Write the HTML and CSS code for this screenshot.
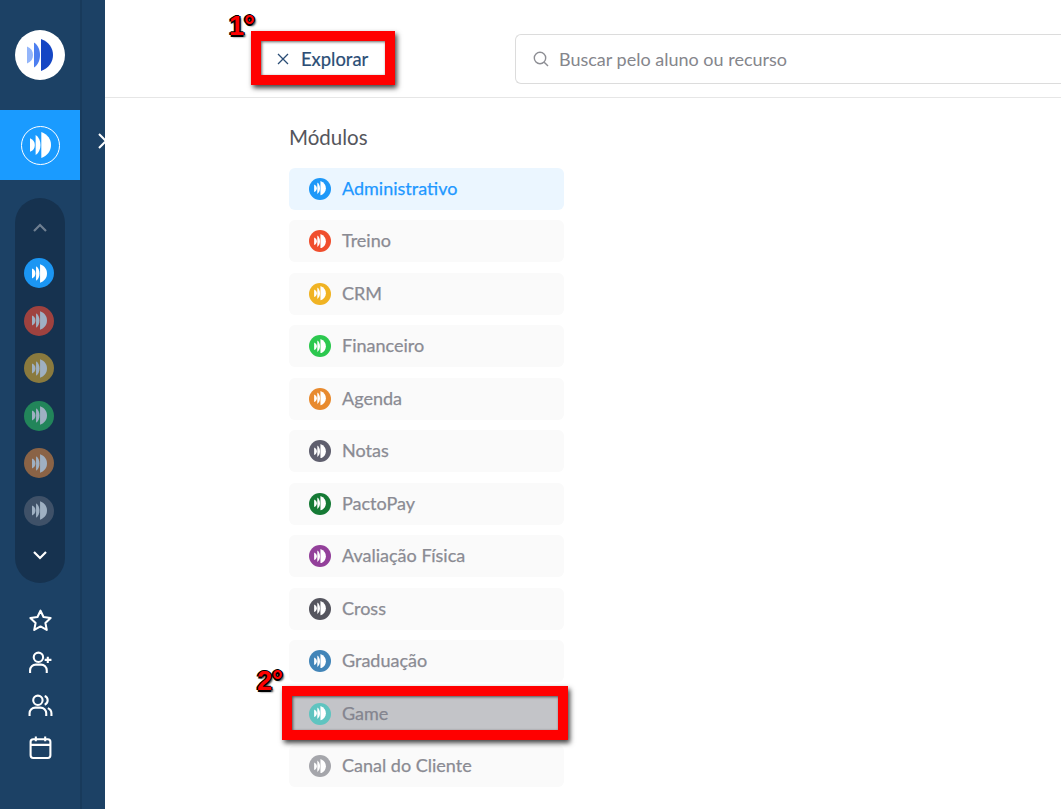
FILE: index.html
```html
<!DOCTYPE html>
<html lang="pt-BR">
<head>
  <meta charset="UTF-8" />
  <meta name="viewport" content="width=device-width, initial-scale=1.0"/>
  <title>Explorar módulos</title>
  <link rel="stylesheet" href="styles.css">
</head>
<body>

  <!-- Shared icon shapes -->
  <svg class="sprite" xmlns="http://www.w3.org/2000/svg">
    <symbol id="mark" viewBox="0 0 26 32">
      <path d="M14 0C22 3 26 9 26 16C26 23 22 29 14 32Z"/>
      <path d="M7 3.500C11 6 13 11 13 16C13 21 11 26 7 28.500Z"/>
      <path d="M0 7.500C4 9 6 12 6 16C6 20 4 23 0 24.500Z"/>
    </symbol>
  </svg>

  <!-- Sidebar -->
  <aside class="sidebar">
    <div class="rail">
      <div class="logo">
        <svg class="logo-mark" viewBox="0 0 26 32">
          <path fill="#1546c4" d="M14 0C22 3 26 9 26 16C26 23 22 29 14 32Z"/>
          <path fill="#4d7ff0" d="M7 3.500C11 6 13 11 13 16C13 21 11 26 7 28.500Z"/>
          <path fill="#93b5fa" d="M0 7.500C4 9 6 12 6 16C6 20 4 23 0 24.500Z"/>
        </svg>
      </div>

      <div class="tile">
        <div class="tile-ring"><svg class="tile-mark"><use href="#mark"/></svg></div>
      </div>

      <div class="pill">
        <svg class="chevron dim" viewBox="0 0 16 10"><path d="M2 8l6-6 6 6"/></svg>
        <div class="pill-list">
          <div class="dot dot-blue"><svg class="dot-mark"><use href="#mark"/></svg></div>
          <div class="dot dot-red"><svg class="dot-mark"><use href="#mark"/></svg></div>
          <div class="dot dot-yellow"><svg class="dot-mark"><use href="#mark"/></svg></div>
          <div class="dot dot-green"><svg class="dot-mark"><use href="#mark"/></svg></div>
          <div class="dot dot-orange"><svg class="dot-mark"><use href="#mark"/></svg></div>
          <div class="dot dot-slate"><svg class="dot-mark"><use href="#mark"/></svg></div>
        </div>
        <svg class="chevron" viewBox="0 0 16 10"><path d="M2 2l6 6 6-6"/></svg>
      </div>

      <div class="shortcuts">
        <svg class="shortcut" viewBox="0 0 24 24"><path d="M12 2.500l2.900 6.200 6.800.900-5 4.700 1.300 6.700-6-3.300-6 3.300 1.300-6.700-5-4.700 6.800-.900z"/></svg>
        <svg class="shortcut" viewBox="0 0 24 24"><circle cx="10" cy="7" r="4.500"/><path d="M2 22v-2.500a5.500 5.500 0 0 1 5.500-5.500h5a5.500 5.500 0 0 1 5.500 5.500v2.500M19 6.500v6M16 9.500h6.500"/></svg>
        <svg class="shortcut" viewBox="0 0 24 24"><circle cx="9.500" cy="7" r="4.500"/><path d="M1.500 22v-2.500a5.500 5.500 0 0 1 5.500-5.500h5a5.500 5.500 0 0 1 5.500 5.500v2.500M16 2.800a4.500 4.500 0 0 1 0 8.400M19 14.500a5.500 5.500 0 0 1 3.500 5v2.500"/></svg>
        <svg class="shortcut" viewBox="0 0 24 24"><rect x="2.500" y="4" width="19" height="18" rx="2.500"/><path d="M2.500 9.500h19M7.500 1.500v4.500M16.500 1.500v4.500"/></svg>
      </div>
    </div>
    <div class="strip">
      <svg class="expand" viewBox="0 0 12 18"><path d="M2 2l7 7-7 7"/></svg>
    </div>
  </aside>

  <!-- Main -->
  <main class="main">
    <header class="topbar">
      <button class="explore">
        <svg class="explore-x" viewBox="0 0 12 12"><path d="M1 1l10 10M11 1L1 11"/></svg>
        Explorar
      </button>
      <div class="search">
        <svg class="search-icon" viewBox="0 0 16 16"><circle cx="7" cy="7" r="5.700"/><path d="M11.200 11.200L15 15"/></svg>
        <span>Buscar pelo aluno ou recurso</span>
      </div>
    </header>

    <section class="modules">
      <h2 class="modules-title">Módulos</h2>
      <div class="module active"><div class="badge c-admin"><svg class="badge-mark"><use href="#mark"/></svg></div><span class="module-name">Administrativo</span></div>
      <div class="module"><div class="badge c-treino"><svg class="badge-mark"><use href="#mark"/></svg></div><span class="module-name">Treino</span></div>
      <div class="module"><div class="badge c-crm"><svg class="badge-mark"><use href="#mark"/></svg></div><span class="module-name">CRM</span></div>
      <div class="module"><div class="badge c-fin"><svg class="badge-mark"><use href="#mark"/></svg></div><span class="module-name">Financeiro</span></div>
      <div class="module"><div class="badge c-agenda"><svg class="badge-mark"><use href="#mark"/></svg></div><span class="module-name">Agenda</span></div>
      <div class="module"><div class="badge c-notas"><svg class="badge-mark"><use href="#mark"/></svg></div><span class="module-name">Notas</span></div>
      <div class="module"><div class="badge c-pay"><svg class="badge-mark"><use href="#mark"/></svg></div><span class="module-name">PactoPay</span></div>
      <div class="module"><div class="badge c-aval"><svg class="badge-mark"><use href="#mark"/></svg></div><span class="module-name">Avaliação Física</span></div>
      <div class="module"><div class="badge c-cross"><svg class="badge-mark"><use href="#mark"/></svg></div><span class="module-name">Cross</span></div>
      <div class="module"><div class="badge c-grad"><svg class="badge-mark"><use href="#mark"/></svg></div><span class="module-name">Graduação</span></div>
      <div class="module marked"><div class="badge c-game"><svg class="badge-mark"><use href="#mark"/></svg></div><span class="module-name">Game</span></div>
      <div class="module"><div class="badge c-canal"><svg class="badge-mark"><use href="#mark"/></svg></div><span class="module-name">Canal do Cliente</span></div>
    </section>
  </main>

  <!-- Annotations drawn over the screenshot -->
  <div class="note-box note-box-1"></div>
  <div class="note-box note-box-2"></div>
  <span class="note-label note-label-1">1°</span>
  <span class="note-label note-label-2">2°</span>

</body>
</html>
```

FILE: styles.css
```css
html, body {
  height: 100%;
}
body {
  font-family: "Lato", "Noto Sans", sans-serif;
  margin: 0;
  background-color: #fff;
  display: flex;
  overflow: hidden;
  position: relative;
}
.sprite {
  display: none;
}

/* Sidebar */
.sidebar {
  width: 105px;
  flex-shrink: 0;
  display: flex;
  background: #1c4165;
  overflow: hidden;
}
.rail {
  width: 80px;
  flex-shrink: 0;
  display: flex;
  flex-direction: column;
  align-items: center;
  border-right: 2px solid #183a5b;
}
.strip {
  flex: 1;
  display: flex;
  flex-direction: column;
  align-items: flex-start;
  padding: 132px 0 0 15px;
}
.expand {
  width: 12px;
  height: 18px;
  flex-shrink: 0;
  fill: none;
  stroke: #fff;
  stroke-width: 2;
}
.logo {
  width: 50px;
  height: 50px;
  margin-top: 30px;
  border-radius: 50%;
  background: #fff;
  display: flex;
  align-items: center;
  justify-content: center;
}
.logo-mark {
  width: 26px;
  height: 32px;
}
.tile {
  width: 100%;
  height: 70px;
  margin-top: 30px;
  background: #1a9bff;
  display: flex;
  align-items: center;
  justify-content: center;
}
.tile-ring {
  width: 37px;
  height: 37px;
  border: 1.500px solid #fff;
  border-radius: 50%;
  display: flex;
  align-items: center;
  justify-content: center;
}
.tile-mark {
  width: 21px;
  height: 26px;
  fill: #fff;
}
.pill {
  width: 50px;
  height: 385px;
  margin-top: 18px;
  box-sizing: border-box;
  padding-top: 25px;
  border-radius: 25px;
  background: #16324f;
  display: flex;
  flex-direction: column;
  align-items: center;
}
.chevron {
  width: 16px;
  height: 10px;
  flex-shrink: 0;
  fill: none;
  stroke: #fff;
  stroke-width: 2.200;
}
.chevron.dim {
  stroke: #6f7f91;
}
.pill-list {
  display: flex;
  flex-direction: column;
  gap: 17.500px;
  margin: 25px 2px 24px 0;
}
.dot {
  width: 30px;
  height: 30px;
  border-radius: 50%;
  display: flex;
  align-items: center;
  justify-content: center;
  fill: #9fb0c2;
}
.dot-mark {
  width: 15px;
  height: 19px;
}
.dot-blue { background: #1b96f3; fill: #fff; }
.dot-red { background: #9f423f; }
.dot-yellow { background: #8a7a3e; }
.dot-green { background: #22855a; }
.dot-orange { background: #8a6346; }
.dot-slate { background: #3f5168; }
.shortcuts {
  display: flex;
  flex-direction: column;
  align-items: center;
  gap: 17.300px;
  margin-top: 25px;
}
.shortcut {
  width: 25px;
  height: 25px;
  fill: none;
  stroke: #fff;
  stroke-width: 2;
  stroke-linejoin: round;
}

/* Main */
.main {
  flex: 1;
  min-width: 0;
  display: flex;
  flex-direction: column;
}
.topbar {
  height: 76px;
  flex-shrink: 0;
  display: flex;
  align-items: center;
  border-bottom: 1px solid #e6e6e6;
  padding-top: 21px;
}
.explore {
  margin-left: 172px;
  width: 238px;
  flex-shrink: 0;
  padding: 0;
  border: none;
  background: none;
  display: flex;
  align-items: center;
  gap: 12px;
  font-family: inherit;
  font-size: 18.400px;
  color: #2a4d75;
  -webkit-text-stroke: 0.2px currentColor;
}
.explore-x {
  width: 12px;
  height: 12px;
  fill: none;
  stroke: #2a4d75;
  stroke-width: 1.300;
}
/* the box runs on to the window edge, so no right side shows */
.search {
  flex: 1;
  height: 50px;
  box-sizing: border-box;
  padding-left: 17px;
  border: 1px solid #dcdcdc;
  border-right: none;
  border-radius: 6px 0 0 6px;
  display: flex;
  align-items: center;
  gap: 10px;
  font-size: 18px;
  color: #85868c;
}
.search-icon {
  width: 16px;
  height: 16px;
  fill: none;
  stroke: #8d8e94;
  stroke-width: 1.400;
}
.modules {
  width: 275px;
  margin-left: 184px;
  display: flex;
  flex-direction: column;
  gap: 10.500px;
}
.modules-title {
  margin: 26px 0 7px;
  font-size: 20.500px;
  line-height: 26px;
  font-weight: 400;
  color: #55565c;
}
.module {
  height: 42px;
  padding-left: 20px;
  border-radius: 6px;
  background: #fafafa;
  display: flex;
  align-items: center;
  gap: 11px;
  font-size: 18px;
  color: #8a8b93;
}
.module-name {
  margin-top: -2px;
  -webkit-text-stroke: 0.25px currentColor;
}
.module.active {
  background: #ebf6ff;
  color: #1e98ff;
}
.module.marked {
  background: #c3c4c8;
  color: #84858f;
}
.badge {
  width: 22px;
  height: 22px;
  border-radius: 50%;
  display: flex;
  align-items: center;
  justify-content: center;
  fill: #fff;
}
.badge-mark {
  width: 12px;
  height: 14.500px;
}
.c-admin { background: #1e98f8; }
.c-treino { background: #f04e2d; }
.c-crm { background: #f0b323; }
.c-fin { background: #2cc84f; }
.c-agenda { background: #e88a2e; }
.c-notas { background: #5f5f6e; }
.c-pay { background: #157a35; }
.c-aval { background: #93409a; }
.c-cross { background: #55555e; }
.c-grad { background: #4285b8; }
.c-game { background: #5fc4c0; }
.c-canal { background: #a5a6ab; }

/* Annotations */
.note-box {
  position: absolute;
  box-sizing: border-box;
  border: 10px solid #ff0000;
  box-shadow: 2px 3px 5px rgba(0, 0, 0, 0.75), inset 1px 1px 3px rgba(0, 0, 0, 0.6);
}
.note-box-1 {
  left: 251px;
  top: 31px;
  width: 144px;
  height: 54px;
}
.note-box-2 {
  left: 282px;
  top: 686px;
  width: 286px;
  height: 54px;
}
.note-label {
  position: absolute;
  font-family: "Liberation Sans", sans-serif;
  font-size: 27px;
  line-height: 28px;
  font-weight: 700;
  color: #ff0000;
  text-shadow: -1.500px 0 0 #000, 1.500px 0 0 #000, 0 -1.500px 0 #000, 0 1.500px 0 #000, 2px 2px 2px #333;
}
.note-label-1 {
  left: 229px;
  top: 12px;
}
.note-label-2 {
  left: 257px;
  top: 667px;
}
```
